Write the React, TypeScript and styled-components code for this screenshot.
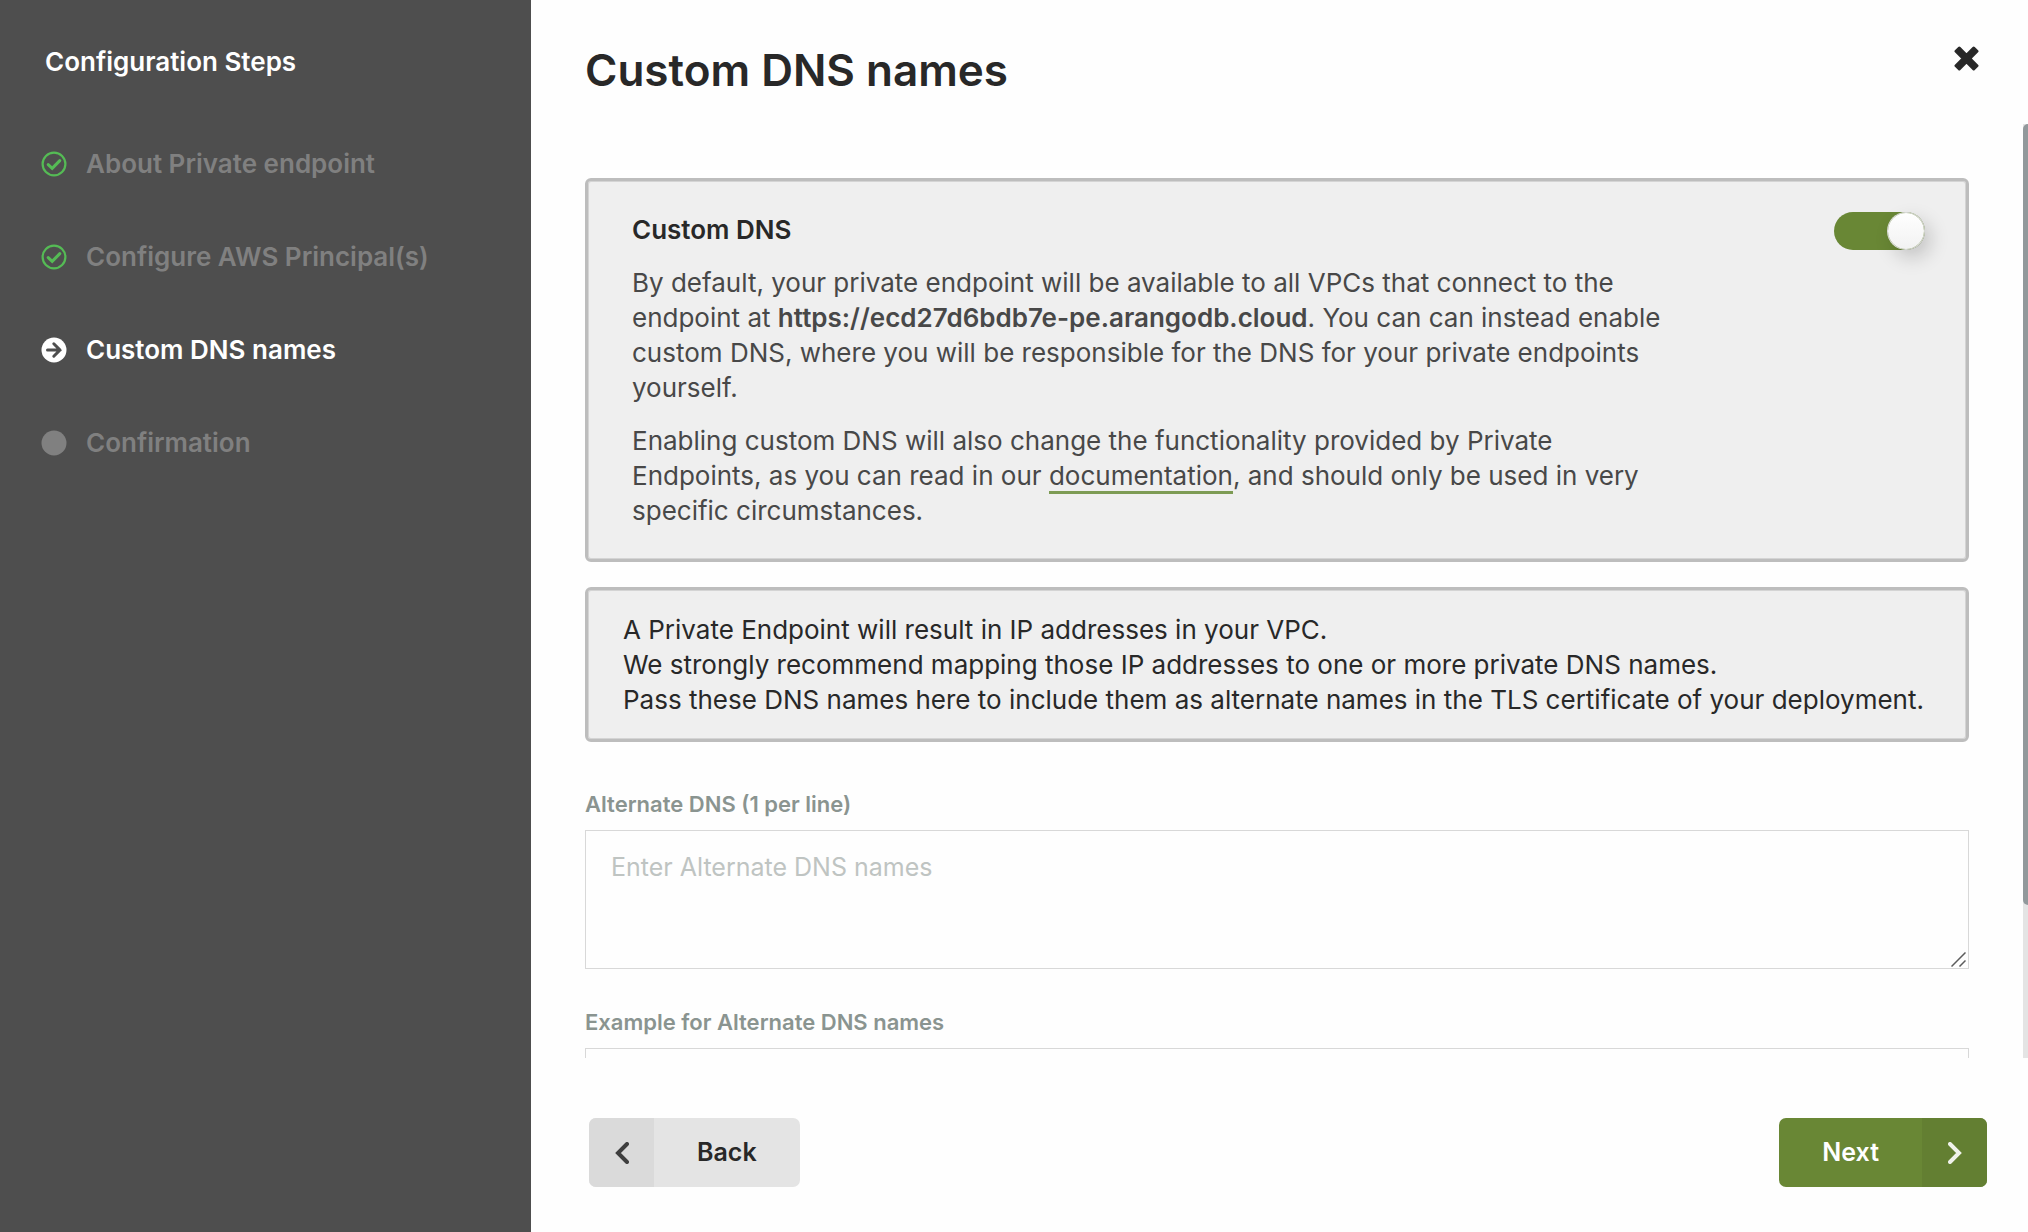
import React, { useLayoutEffect, useRef, useState } from "react";
import styled, { createGlobalStyle, css } from "styled-components";

const GlobalStyle = createGlobalStyle`
  *, *::before, *::after { box-sizing: border-box; }
  body {
    margin: 0;
    background: #fefefe;
    color: #282828;
    font-family: Inter, "Liberation Sans", sans-serif;
    font-size: 26px;
    line-height: 35px;
  }
`;

const Layout = styled.div`
  display: flex;
  height: 100vh;
`;

const Sidebar = styled.aside`
  flex: 0 0 531px;
  padding: 44px 41px;
  background: #4e4e4e;
`;

const SidebarTitle = styled.h2`
  margin: 0 0 67px 4px;
  color: #ffffff;
  font-size: 26px;
  font-weight: 600;
  line-height: 35px;
`;

const StepList = styled.ol`
  display: flex;
  flex-direction: column;
  gap: 58px;
  margin: 0;
  padding: 0;
  list-style: none;
`;

const Step = styled.li<{ $active?: boolean }>`
  display: flex;
  align-items: center;
  gap: 19px;
  color: ${(p) => (p.$active ? "#ffffff" : "#808080")};
  font-size: 26px;
  font-weight: 600;
`;

const StepIcon = styled.svg`
  flex: none;
  width: 26px;
  height: 26px;
`;

const Main = styled.main`
  flex: 1;
  min-width: 0;
  display: flex;
  flex-direction: column;
`;

const Header = styled.header`
  display: flex;
  justify-content: space-between;
  align-items: flex-start;
  height: 124px;
  padding: 41px 44px 0 54px;
`;

const Title = styled.h1`
  margin: 0;
  font-size: 44px;
  font-weight: 600;
  line-height: 58px;
`;

const CloseButton = styled.button`
  display: flex;
  padding: 5px;
  border: 0;
  background: none;
  color: #282828;
  cursor: pointer;
`;

const Body = styled.div`
  flex: 1;
  min-height: 0;
  display: flex;
`;

const Scroller = styled.div`
  flex: 1;
  min-width: 0;
  overflow-y: auto;
  scrollbar-width: none;
  padding: 54px 54px 18px;
`;

const Track = styled.div`
  flex: 0 0 5px;
  background: #e4e4e4;
`;

const Thumb = styled.div`
  border-radius: 5px 0 0 5px;
  background: #92999c;
`;

const panel = css`
  border: 3px solid #bdbdbd;
  border-radius: 6px;
  box-shadow: inset 0 0 0 1px #d4d4d4;
  background: #efefef;
`;

const SettingCard = styled.section`
  ${panel}
  display: flex;
  justify-content: space-between;
  gap: 24px;
  margin-bottom: 25px;
  padding: 31px 41px 31px 44px;
`;

const SettingText = styled.div`
  max-width: 1040px;
  color: #484848;
`;

const SettingTitle = styled.h3`
  margin: 0 0 18px;
  color: #282828;
  font-size: 26px;
  font-weight: 600;
  line-height: 35px;
`;

const Paragraph = styled.p`
  margin: 0;
  & + & { margin-top: 18px; }
`;

const Endpoint = styled.strong`
  font-weight: 600;
`;

const DocLink = styled.a`
  color: inherit;
  text-decoration: none;
  border-bottom: 3px solid #7d9b54;
`;

const Switch = styled.input`
  appearance: none;
  flex: none;
  display: flex;
  justify-content: flex-start;
  width: 91px;
  height: 38px;
  margin: 0;
  padding: 1px;
  border-radius: 19px;
  background: #bdbdbd;
  cursor: pointer;

  &::before {
    content: "";
    width: 36px;
    height: 36px;
    border-radius: 50%;
    background: linear-gradient(#ffffff, #f2f2f2);
    box-shadow: 0 0 0 1px #dcdcdc, 6px 8px 20px rgba(0, 0, 0, 0.2);
  }

  &:checked {
    justify-content: flex-end;
    background: #698735;
  }
`;

const Notice = styled.section`
  ${panel}
  margin-bottom: 45px;
  padding: 22px 34px 22px 35px;
`;

const Field = styled.div`
  display: flex;
  flex-direction: column;
  gap: 8px;
  margin-bottom: 36px;
`;

const Label = styled.label`
  color: #8a9490;
  font-size: 22px;
  font-weight: 600;
  line-height: 35px;
`;

const TextAreaBox = styled.div`
  position: relative;
  display: flex;
`;

const TextArea = styled.textarea`
  width: 100%;
  height: 139px;
  padding: 19px 25px;
  border: 1px solid #d8d8d8;
  border-radius: 0;
  outline: 0;
  resize: none;
  background: #fefefe;
  color: #282828;
  font: inherit;
  font-size: 25px;

  &::placeholder { color: #bfc4c2; opacity: 1; }
`;

const Grip = styled.svg`
  position: absolute;
  right: 3px;
  bottom: 2px;
  width: 15px;
  height: 15px;
  pointer-events: none;
`;

const Footer = styled.footer`
  display: flex;
  justify-content: space-between;
  padding: 60px 41px 45px 58px;
`;

const NavButton = styled.button<{ $primary?: boolean }>`
  display: flex;
  height: 69px;
  padding: 0;
  border: 0;
  border-radius: 7px;
  overflow: hidden;
  background: ${(p) => (p.$primary ? "#698735" : "#e4e4e4")};
  color: ${(p) => (p.$primary ? "#ffffff" : "#282828")};
  font: inherit;
  font-size: 25px;
  font-weight: 600;
  cursor: pointer;
`;

const NavLabel = styled.span`
  align-self: center;
  padding: 0 43px;
`;

const NavIcon = styled.span<{ $primary?: boolean }>`
  display: flex;
  align-items: center;
  justify-content: center;
  align-self: stretch;
  width: 65px;
  background: ${(p) => (p.$primary ? "#637f32" : "#dadada")};
  color: ${(p) => (p.$primary ? "#f0f2eb" : "#3e3e3e")};
`;

function Cross() {
  return (
    <svg width="25" height="25" viewBox="0 0 25 25" aria-hidden="true">
      <path
        fill="currentColor"
        stroke="currentColor"
        strokeWidth="3"
        strokeLinejoin="round"
        d="M5.3 2 L12.5 9.2 L19.7 2 L23 5.3 L15.8 12.5 L23 19.7 L19.7 23 L12.5 15.8 L5.3 23 L2 19.7 L9.2 12.5 L2 5.3 Z"
      />
    </svg>
  );
}

function Chevron({ d }: { d: string }) {
  return (
    <svg width="14" height="22" viewBox="0 0 14 22" fill="none" stroke="currentColor"
      strokeWidth="4" strokeLinecap="round" strokeLinejoin="miter" aria-hidden="true">
      <path d={d} />
    </svg>
  );
}

type StepState = "done" | "active" | "pending";

function StepMark({ state }: { state: StepState }) {
  if (state === "done") {
    return (
      <StepIcon viewBox="0 0 26 26" fill="none" stroke="#55bb55" aria-hidden="true">
        <circle cx="13" cy="13" r="11.4" strokeWidth="2.2" />
        <path d="M7.2 13.6 L11.2 17.4 L18.8 9.6" strokeWidth="3" strokeLinecap="round" />
      </StepIcon>
    );
  }
  return (
    <StepIcon viewBox="0 0 26 26" fill="none" aria-hidden="true">
      <circle cx="13" cy="13" r="12.5" fill="currentColor" />
      {state === "active" && (
        <path d="M6.5 13 H19 M12.8 6.8 L19 13 L12.8 19.2" stroke="#4e4e4e" strokeWidth="3" strokeLinecap="round" />
      )}
    </StepIcon>
  );
}

const steps: { name: string; state: StepState }[] = [
  { name: "About Private endpoint", state: "done" },
  { name: "Configure AWS Principal(s)", state: "done" },
  { name: "Custom DNS names", state: "active" },
  { name: "Confirmation", state: "pending" },
];

export default function App() {
  const scroller = useRef<HTMLDivElement>(null);
  const [thumb, setThumb] = useState({ size: 100, offset: 0 });

  const measure = () => {
    const el = scroller.current;
    if (!el) return;
    setThumb({
      size: (el.clientHeight / el.scrollHeight) * 100,
      offset: (el.scrollTop / el.scrollHeight) * el.clientHeight,
    });
  };

  useLayoutEffect(() => {
    measure();
    window.addEventListener("resize", measure);
    return () => window.removeEventListener("resize", measure);
  }, []);

  return (
    <>
      <GlobalStyle />
      <Layout>
        <Sidebar>
          <SidebarTitle>Configuration Steps</SidebarTitle>
          <StepList>
            {steps.map((s) => (
              <Step key={s.name} $active={s.state === "active"}>
                <StepMark state={s.state} />
                {s.name}
              </Step>
            ))}
          </StepList>
        </Sidebar>
        <Main>
          <Header>
            <Title>Custom DNS names</Title>
            <CloseButton type="button" aria-label="Close">
              <Cross />
            </CloseButton>
          </Header>
          <Body>
            <Scroller ref={scroller} onScroll={measure}>
              <SettingCard>
                <SettingText>
                  <SettingTitle id="custom-dns">Custom DNS</SettingTitle>
                  <Paragraph>
                    By default, your private endpoint will be available to all VPCs that connect to the endpoint at{" "}
                    <Endpoint>https://ecd27d6bdb7e-pe.arangodb.cloud</Endpoint>. You can can instead enable custom
                    DNS, where you will be responsible for the DNS for your private endpoints yourself.
                  </Paragraph>
                  <Paragraph>
                    Enabling custom DNS will also change the functionality provided by Private Endpoints, as you can
                    read in our <DocLink href="#documentation">documentation</DocLink>, and should only be used in
                    very specific circumstances.
                  </Paragraph>
                </SettingText>
                <Switch type="checkbox" role="switch" defaultChecked aria-labelledby="custom-dns" />
              </SettingCard>
              <Notice>
                <Paragraph>
                  A Private Endpoint will result in IP addresses in your VPC.
                  <br />
                  We strongly recommend mapping those IP addresses to one or more private DNS names.
                  <br />
                  Pass these DNS names here to include them as alternate names in the TLS certificate of your
                  deployment.
                </Paragraph>
              </Notice>
              <Field>
                <Label htmlFor="alternate-dns">Alternate DNS (1 per line)</Label>
                <TextAreaBox>
                  <TextArea id="alternate-dns" placeholder="Enter Alternate DNS names" />
                  <Grip viewBox="0 0 15 15" stroke="#5c5c5c" strokeWidth="1.5" aria-hidden="true">
                    <path d="M0.5 14.5 L14.5 0.5 M8.5 14.5 L14.5 8.5" />
                  </Grip>
                </TextAreaBox>
              </Field>
              <Field>
                <Label htmlFor="example-dns">Example for Alternate DNS names</Label>
                <TextArea id="example-dns" readOnly />
              </Field>
            </Scroller>
            <Track>
              <Thumb style={{ height: `${thumb.size}%`, marginTop: thumb.offset }} />
            </Track>
          </Body>
          <Footer>
            <NavButton type="button">
              <NavIcon>
                <Chevron d="M12 2 L3 11 L12 20" />
              </NavIcon>
              <NavLabel>Back</NavLabel>
            </NavButton>
            <NavButton type="button" $primary>
              <NavLabel>Next</NavLabel>
              <NavIcon $primary>
                <Chevron d="M2 2 L11 11 L2 20" />
              </NavIcon>
            </NavButton>
          </Footer>
        </Main>
      </Layout>
    </>
  );
}
